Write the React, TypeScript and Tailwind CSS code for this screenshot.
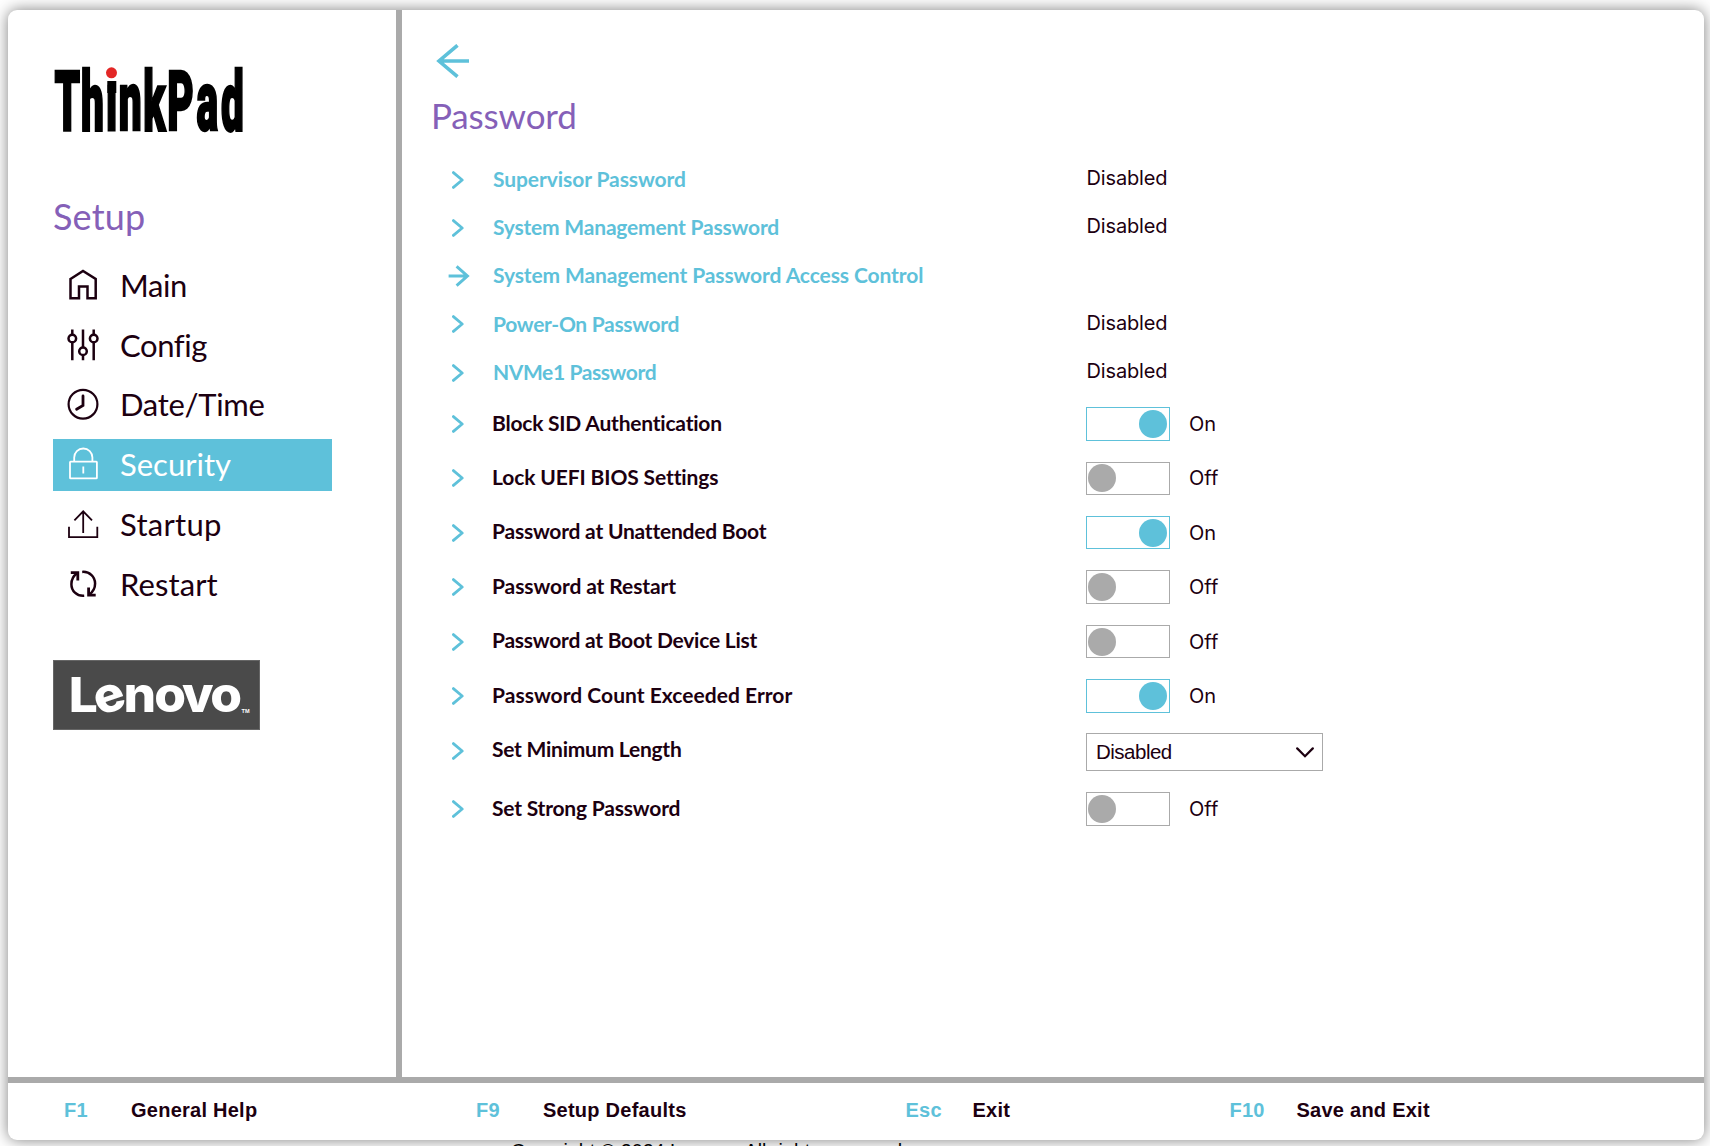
import type { ReactNode } from "react";

/* ---------- logos ---------- */

function ThinkPadLogo() {
  return (
    <svg width="192" height="68" viewBox="0 0 192 68" className="block overflow-visible" role="img">
      <g transform="scale(0.49 1)">
        <text
          x="1 55 106 132 182 231 291 341"
          y="63"
          fontFamily="Roboto, sans-serif"
          fontWeight="900"
          fontSize="83"
          fill="#000"
          stroke="#000"
          strokeWidth="2.6"
        >
          ThinkPad
        </text>
      </g>
      <rect x="52" y="-4" width="11.5" height="18.5" fill="#fff" />
      <rect x="53.3" y="14" width="9" height="12" fill="#000" />
      <circle cx="57.5" cy="5.8" r="5.5" fill="#e32726" />
    </svg>
  );
}

function LenovoLogo() {
  return (
    <svg width="207" height="70" viewBox="0 0 207 70" className="block" role="img">
      <rect x="0.5" y="0.5" width="206" height="69" fill="#4a4a4a" stroke="#666" />
      <g transform="scale(1.06 1)">
        <text
          x="14.8 44.2 66.6 95.6 121.8 148.4"
          y="52 56 52 52 52 52"
          rotate="0 -20 0 0 0 0"
          fontFamily="Inter, sans-serif"
          fontWeight="800"
          fontSize="48.5"
          fill="#fff"
        >
          Lenovo
        </text>
      </g>
      <text x="188.5" y="53" fontFamily="Liberation Sans, sans-serif" fontWeight="700" fontSize="5.6" fill="#fff">
        TM
      </text>
    </svg>
  );
}

/* ---------- icons ---------- */

function NavIcon({ children, stroke = 2.5 }: { children: ReactNode; stroke?: number }) {
  return (
    <svg
      width="32"
      height="32"
      viewBox="0 0 32 32"
      fill="none"
      stroke="currentColor"
      strokeWidth={stroke}
      className="mt-[9px] shrink-0 self-start overflow-visible"
    >
      {children}
    </svg>
  );
}

const HomeIcon = (
  <NavIcon>
    <path d="M3.5 10 16 2 28.7 10V29.2H20.5V17.6H12V29.2H3.5Z" />
  </NavIcon>
);
const SlidersIcon = (
  <NavIcon>
    <path d="M5.3.5V5.7M5.3 13.3V31.2M16 .5V18.4M16 26V31.2M26.7.5V5.7M26.7 13.3V31.2" />
    <circle cx="5.3" cy="9.5" r="3.8" />
    <circle cx="16" cy="22.2" r="3.8" />
    <circle cx="26.7" cy="9.5" r="3.8" />
  </NavIcon>
);
const ClockIcon = (
  <NavIcon stroke={2.2}>
    <circle cx="16" cy="16.2" r="14.4" />
    <path d="M16 8V17.4L9.6 21.3" strokeWidth="2.8" strokeLinecap="round" />
  </NavIcon>
);
const LockIcon = (
  <NavIcon stroke={1.8}>
    <rect x="3" y="13.6" width="26.9" height="16.8" rx="0.6" />
    <path d="M7.2 13.6V9.6A9.1 9.1 0 0 1 25.4 9.6V13.6M16.3 18.6V25.4" />
  </NavIcon>
);
const StartupIcon = (
  <NavIcon stroke={1.8}>
    <path d="M2 18.8V29.2H30.3V18.8M16.2 25V3.4M7.4 12.4 16.2 3.4 25 12.4" />
  </NavIcon>
);
const RestartIcon = (
  <NavIcon>
    <path d="M17.2 27.8C9.5 28.4 4.4 22.8 4.4 16.2 4.4 11.4 6.8 7.4 10.2 5.2" />
    <path d="M3.8 4.6H10.8V12.4" strokeWidth="2.8" />
    <path d="M15.2 3.9C22.9 3.3 28.1 9.1 28.1 15.5 28.1 20.4 25.6 24.2 22.1 26.6" />
    <path d="M21.6 19.4V27.2H28.7" strokeWidth="2.8" />
  </NavIcon>
);

function Chevron() {
  return (
    <svg width="12" height="18" viewBox="0 0 12 18" fill="none" stroke="#5ec1da" strokeWidth="2.8" className="ml-[9px]">
      <path d="M1.4 1.6 10.2 9 1.4 16.4" strokeLinecap="round" strokeLinejoin="round" />
    </svg>
  );
}

function RightArrow() {
  return (
    <svg width="22" height="22" viewBox="0 0 22 22" fill="none" stroke="#5ec1da" strokeWidth="3" className="ml-[5px]">
      <path d="M.6 11H19M8.6 1.4 19.4 11 8.6 20.6" />
    </svg>
  );
}

/* ---------- data ---------- */

const nav = [
  { label: "Main", icon: HomeIcon, tracking: "tracking-[-0.4px]" },
  { label: "Config", icon: SlidersIcon, tracking: "tracking-[-0.4px]" },
  { label: "Date/Time", icon: ClockIcon, tracking: "tracking-[-0.3px]" },
  { label: "Security", icon: LockIcon, tracking: "tracking-normal", active: true },
  { label: "Startup", icon: StartupIcon, tracking: "tracking-[0.3px]" },
  { label: "Restart", icon: RestartIcon, tracking: "tracking-[0.1px]" },
];

const links = [
  { label: "Supervisor Password", value: "Disabled", tracking: "tracking-[-0.08px]" },
  { label: "System Management Password", value: "Disabled", tracking: "tracking-[-0.19px]" },
  { label: "System Management Password Access Control", arrow: true, tracking: "tracking-[-0.1px]" },
  { label: "Power-On Password", value: "Disabled", tracking: "tracking-[-0.31px]" },
  { label: "NVMe1 Password", value: "Disabled", tracking: "tracking-[-0.4px]" },
];

const toggles = [
  { label: "Block SID Authentication", on: true, tracking: "tracking-[-0.22px]" },
  { label: "Lock UEFI BIOS Settings", on: false, tracking: "tracking-[-0.12px]" },
  { label: "Password at Unattended Boot", on: true, tracking: "tracking-[-0.22px]" },
  { label: "Password at Restart", on: false, tracking: "tracking-[-0.1px]" },
  { label: "Password at Boot Device List", on: false, tracking: "tracking-[-0.24px]" },
  { label: "Password Count Exceeded Error", on: true, tracking: "tracking-[0.03px]" },
];

const keys = [
  { key: "F1", label: "General Help", width: "w-[412px]" },
  { key: "F9", label: "Setup Defaults", width: "w-[429.5px]" },
  { key: "Esc", label: "Exit", width: "w-[324px]" },
  { key: "F10", label: "Save and Exit", width: "w-[240px]" },
];

/* ---------- rows ---------- */

function Toggle({ on }: { on: boolean }) {
  return (
    <div className="flex items-center pt-[3px]">
      <div
        className={
          on
            ? "flex h-[33.5px] w-[84px] items-center justify-end border border-[#5ec1da] pr-[2px]"
            : "flex h-[33.5px] w-[84px] items-center justify-start border border-[#aaaaaa] pl-px"
        }
      >
        <div className={on ? "size-7 rounded-full bg-[#5ec1da]" : "size-7 rounded-full bg-[#aaaaaa]"} />
      </div>
      <span className="ml-[19px] font-[Inter,sans-serif] text-[20px]">{on ? "On" : "Off"}</span>
    </div>
  );
}

function ToggleRow({ label, on, tracking }: { label: string; on: boolean; tracking: string }) {
  return (
    <div className="grid h-[54.4px] grid-cols-[49px_594px_1fr] items-center">
      <div className="pt-[3px]">
        <Chevron />
      </div>
      <div className={`text-[21px] font-bold ${tracking}`}>{label}</div>
      <Toggle on={on} />
    </div>
  );
}

export default function App() {
  return (
    <div className="h-[1146px] w-full overflow-hidden bg-white pt-[10px] pl-2 font-[Lato,sans-serif] text-[#1c0010] [font-variant-ligatures:no-common-ligatures]">
      <div className="flex h-[1130px] w-[1696px] flex-col overflow-hidden rounded-[9px] bg-white shadow-[0_0_15px_rgba(0,0,0,0.5)]">
        <div className="flex flex-1">
          <aside className="w-[394px] border-r-[6px] border-[#aaaaaa] pl-[45px]">
            <div className="pt-[57px] pl-px">
              <ThinkPadLogo />
            </div>
            <h2 className="mt-[61px] text-[36px] leading-10 tracking-[0.2px] text-[#8560b8]">Setup</h2>
            <nav className="mt-[23.75px] flex flex-col gap-[7.75px]">
              {nav.map((item) => (
                <a
                  key={item.label}
                  className={
                    item.active
                      ? "flex h-[52px] w-[279px] items-center bg-[#5ec1da] pl-[14px] text-white"
                      : "flex h-[52px] w-[279px] items-center pl-[14px]"
                  }
                >
                  {item.icon}
                  <span className={`ml-[21px] pb-[1px] text-[31px] leading-[37px] ${item.tracking}`}>{item.label}</span>
                </a>
              ))}
            </nav>
            <div className="mt-[49.5px]">
              <LenovoLogo />
            </div>
          </aside>

          <main className="flex-1 pl-[29px]">
            <svg
              width="34"
              height="34"
              viewBox="0 0 34 34"
              fill="none"
              stroke="#5ec1da"
              strokeWidth="3.6"
              className="mt-[34px] ml-[5px] block"
            >
              <path d="M33 17H3.4M21.5 1.3 3 17 21.5 32.7" />
            </svg>
            <h1 className="mt-[17px] text-[35px] leading-10 tracking-[-0.15px] text-[#8560b8]">Password</h1>

            <div className="mt-[19px] pl-[12px]">
              {links.map((row) => (
                <div key={row.label} className="grid h-[48.25px] grid-cols-[50px_593.5px_1fr] items-center">
                  <div className="pt-[3px]">{row.arrow ? <RightArrow /> : <Chevron />}</div>
                  <div className={`pt-px text-[21px] font-bold text-[#5ec1da] ${row.tracking}`}>{row.label}</div>
                  <div className="font-[Inter,sans-serif] text-[20px] tracking-[-0.15px]">{row.value}</div>
                </div>
              ))}
              {toggles.map((row) => (
                <ToggleRow key={row.label} {...row} />
              ))}
              <div className="grid h-[58.6px] grid-cols-[49px_594px_1fr] items-center">
                <div>
                  <Chevron />
                </div>
                <div className="pb-[5px] text-[21px] font-bold tracking-[-0.25px]">Set Minimum Length</div>
                <div className="pt-[3px]">
                  <div className="flex h-[38px] w-[237px] items-center justify-between border border-[#aaaaaa] pr-[8px] pl-[9px]">
                    <span className="font-['Liberation_Sans',sans-serif] text-[20.5px] tracking-[-0.5px]">Disabled</span>
                    <svg width="18" height="11" viewBox="0 0 18 11" fill="none" stroke="currentColor" strokeWidth="2.2">
                      <path d="M1.2 1.4 9 9.2 16.8 1.4" strokeLinecap="round" />
                    </svg>
                  </div>
                </div>
              </div>
              <ToggleRow label="Set Strong Password" on={false} tracking="tracking-[-0.2px]" />
            </div>
          </main>
        </div>

        <footer className="flex h-[63px] items-center border-t-[6px] border-[#aaaaaa] pb-[3px] pl-[56px] font-['Liberation_Sans',sans-serif] text-[20px] font-bold tracking-[0.25px]">
          {keys.map((k) => (
            <div key={k.key} className={`flex ${k.width}`}>
              <span className="w-[67px] text-[#5ec1da]">{k.key}</span>
              <span>{k.label}</span>
            </div>
          ))}
        </footer>
      </div>
      <div className="relative ml-[503px] font-['Liberation_Sans',sans-serif] text-[19.6px] leading-[22px] tracking-[0.05px] whitespace-nowrap text-black">
        Copyright © 2024 Lenovo. All rights reserved.
      </div>
    </div>
  );
}
